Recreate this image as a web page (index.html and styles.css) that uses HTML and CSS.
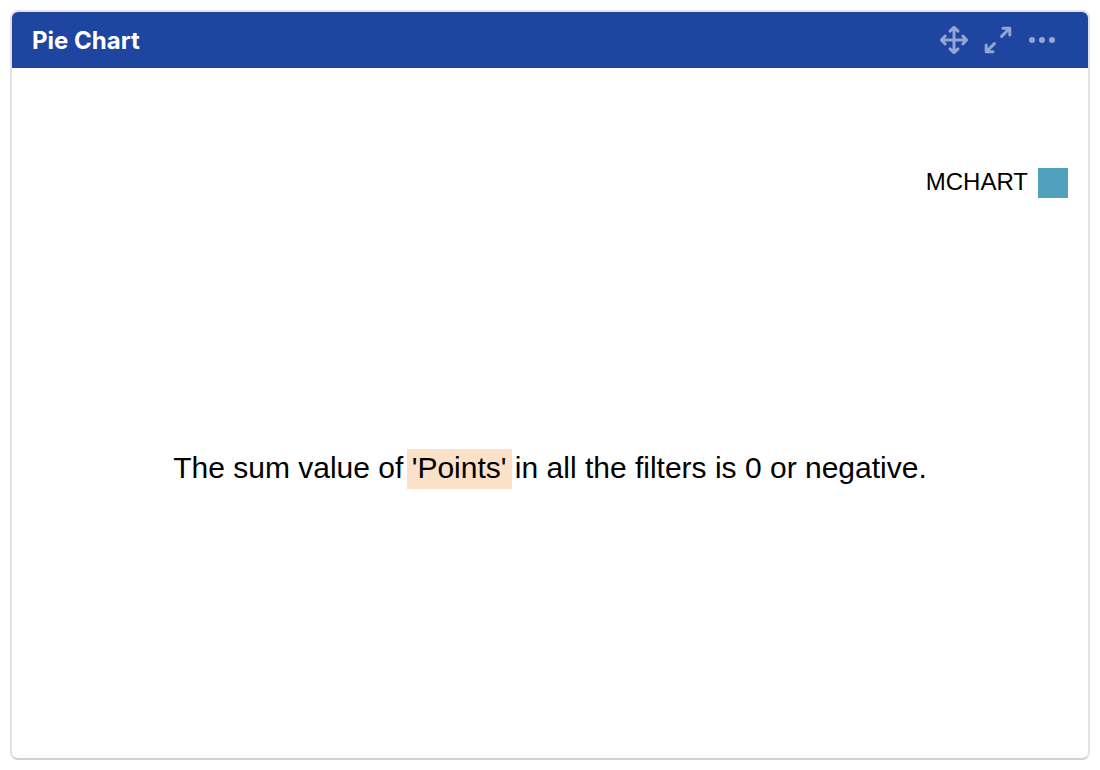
FILE: index.html
```html
<!DOCTYPE html>
<html lang="en">
<head>
<meta charset="utf-8">
<title>Pie Chart</title>
<link rel="stylesheet" href="styles.css">
</head>
<body>
<section class="gadget">
  <header class="gadget-header">
    <h1 class="gadget-title">Pie Chart</h1>
    <div class="gadget-actions">
      <button class="icon-button" type="button" aria-label="Move">
        <svg width="30" height="30" viewBox="0 0 30 30" fill="none" stroke="currentColor" stroke-width="3" stroke-linecap="round" stroke-linejoin="round"><path d="M15 3V27M3 15H27M11 6.2L15 2.4L19 6.2M11 23.8L15 27.6L19 23.8M6.2 11L2.4 15L6.2 19M23.8 11L27.6 15L23.8 19"/></svg>
      </button>
      <button class="icon-button" type="button" aria-label="Maximize">
        <svg width="30" height="30" viewBox="0 0 30 30" fill="none" stroke="currentColor" stroke-width="3" stroke-linecap="round" stroke-linejoin="round"><path d="M18.6 11.4L26.5 3.5M20 3.2H26.8V10M11.4 18.6L3.5 26.5M3.2 20V26.8H10"/></svg>
      </button>
      <button class="icon-button" type="button" aria-label="More actions">
        <svg width="30" height="30" viewBox="0 0 30 30" fill="currentColor"><circle cx="5" cy="15" r="3"/><circle cx="15" cy="15" r="3"/><circle cx="25" cy="15" r="3"/></svg>
      </button>
    </div>
  </header>
  <div class="gadget-body">
    <div class="legend"><span>MCHART</span><span class="legend-swatch"></span></div>
    <div class="message-area">
      <p class="message">The sum value of <span class="highlight">'Points'</span> in all the filters is 0 or negative.</p>
    </div>
  </div>
</section>
</body>
</html>
```

FILE: styles.css
```css
* { box-sizing: border-box; }

body {
  margin: 0;
  min-height: 100vh;
  padding: 10px;
  display: flex;
  background: #fff;
  color: #000;
  font-family: "Liberation Sans", Arial, sans-serif;
}

.gadget {
  flex: 1;
  display: flex;
  flex-direction: column;
  border: 2px solid #e1e2e8;
  border-bottom-color: #cfd3d9;
  border-radius: 8px;
  overflow: hidden;
}

.gadget-header {
  display: flex;
  align-items: center;
  justify-content: space-between;
  height: 56px;
  padding: 0 31px 0 20px;
  background: #1e45a0;
}

.gadget-title {
  margin: 0;
  padding-top: 2px;
  color: #fff;
  font: 700 24px/28px Inter, sans-serif;
}

.gadget-actions {
  display: flex;
  gap: 14px;
}

.icon-button {
  display: flex;
  padding: 0;
  border: 0;
  background: none;
  color: #93a5d2;
  cursor: pointer;
}

.gadget-body {
  flex: 1;
  display: flex;
  flex-direction: column;
  padding: 100px 20px 18px;
}

.legend {
  display: flex;
  justify-content: flex-end;
  gap: 10px;
  font-size: 24px;
  line-height: 28px;
}

.legend-swatch {
  width: 30px;
  height: 30px;
  background: #50a1be;
}

.message-area {
  flex: 1;
  display: flex;
  align-items: center;
  justify-content: center;
}

.message {
  margin: 0;
  font-size: 30px;
  line-height: 38px;
}

.highlight {
  display: inline-block;
  margin: 0 -5px;
  padding: 0 5px 2px;
  background: #fae1c7;
}
```
